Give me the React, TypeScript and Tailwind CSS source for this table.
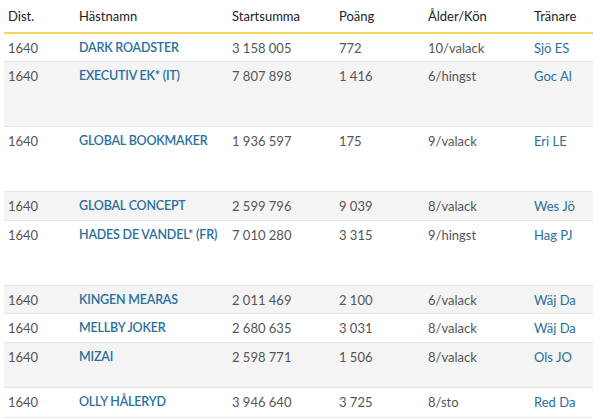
import React from 'react';

interface Horse {
  dist: string
  name: string
  sum: string
  points: string
  age: string
  trainer: string
  h: string
}

const horses: Horse[] = [
  { dist: '1640', name: 'DARK ROADSTER', sum: '3 158 005', points: '772', age: '10/valack', trainer: 'Sjö ES', h: 'h-[28px] bg-white' },
  { dist: '1640', name: 'EXECUTIV EK* (IT)', sum: '7 807 898', points: '1 416', age: '6/hingst', trainer: 'Goc Al', h: 'h-[65px] bg-[#f4f4f4]' },
  { dist: '1640', name: 'GLOBAL BOOKMAKER', sum: '1 936 597', points: '175', age: '9/valack', trainer: 'Eri LE', h: 'h-[65px] bg-white' },
  { dist: '1640', name: 'GLOBAL CONCEPT', sum: '2 599 796', points: '9 039', age: '8/valack', trainer: 'Wes Jö', h: 'h-[29px] bg-[#f4f4f4]' },
  { dist: '1640', name: 'HADES DE VANDEL* (FR)', sum: '7 010 280', points: '3 315', age: '9/hingst', trainer: 'Hag PJ', h: 'h-[65px] bg-white' },
  { dist: '1640', name: 'KINGEN MEARAS', sum: '2 011 469', points: '2 100', age: '6/valack', trainer: 'Wäj Da', h: 'h-[28px] bg-[#f4f4f4]' },
  { dist: '1640', name: 'MELLBY JOKER', sum: '2 680 635', points: '3 031', age: '8/valack', trainer: 'Wäj Da', h: 'h-[29px] bg-white' },
  { dist: '1640', name: 'MIZAI', sum: '2 598 771', points: '1 506', age: '8/valack', trainer: 'Ols JO', h: 'h-[45px] bg-[#f4f4f4]' },
  { dist: '1640', name: 'OLLY HÅLERYD', sum: '3 946 640', points: '3 725', age: '8/sto', trainer: 'Red Da', h: 'h-[30px] bg-white' },
];

const cols = 'grid grid-cols-[71px_153px_107px_89px_106px_1fr] pl-[4px]';

const App = () => {
  return (
    <div className="w-[593px] h-[418px] overflow-hidden bg-white pl-[4px] text-[13px] font-['Lato','Liberation_Sans',sans-serif]">
      <div className={`${cols} h-[34px] border-b-2 border-[#fcd45c] text-[#222] items-center pt-[1px]`}>
        <div>Dist.</div>
        <div>Hästnamn</div>
        <div>Startsumma</div>
        <div>Poäng</div>
        <div>Ålder/Kön</div>
        <div>Tränare</div>
      </div>
      {horses.map((horse, i) => (
        <div key={i} className={`${cols} ${horse.h} border-b border-[#e6e6e6] pt-[4px] leading-5 text-[#555]`}>
          <div>{horse.dist}</div>
          <div className="font-semibold text-[12.5px] tracking-[-0.2px] text-[#2a6f9b]">{horse.name}</div>
          <div>{horse.sum}</div>
          <div>{horse.points}</div>
          <div>{horse.age}</div>
          <div className="text-[#2a6f9b]">{horse.trainer}</div>
        </div>
      ))}
    </div>
  );
};

export default App;
